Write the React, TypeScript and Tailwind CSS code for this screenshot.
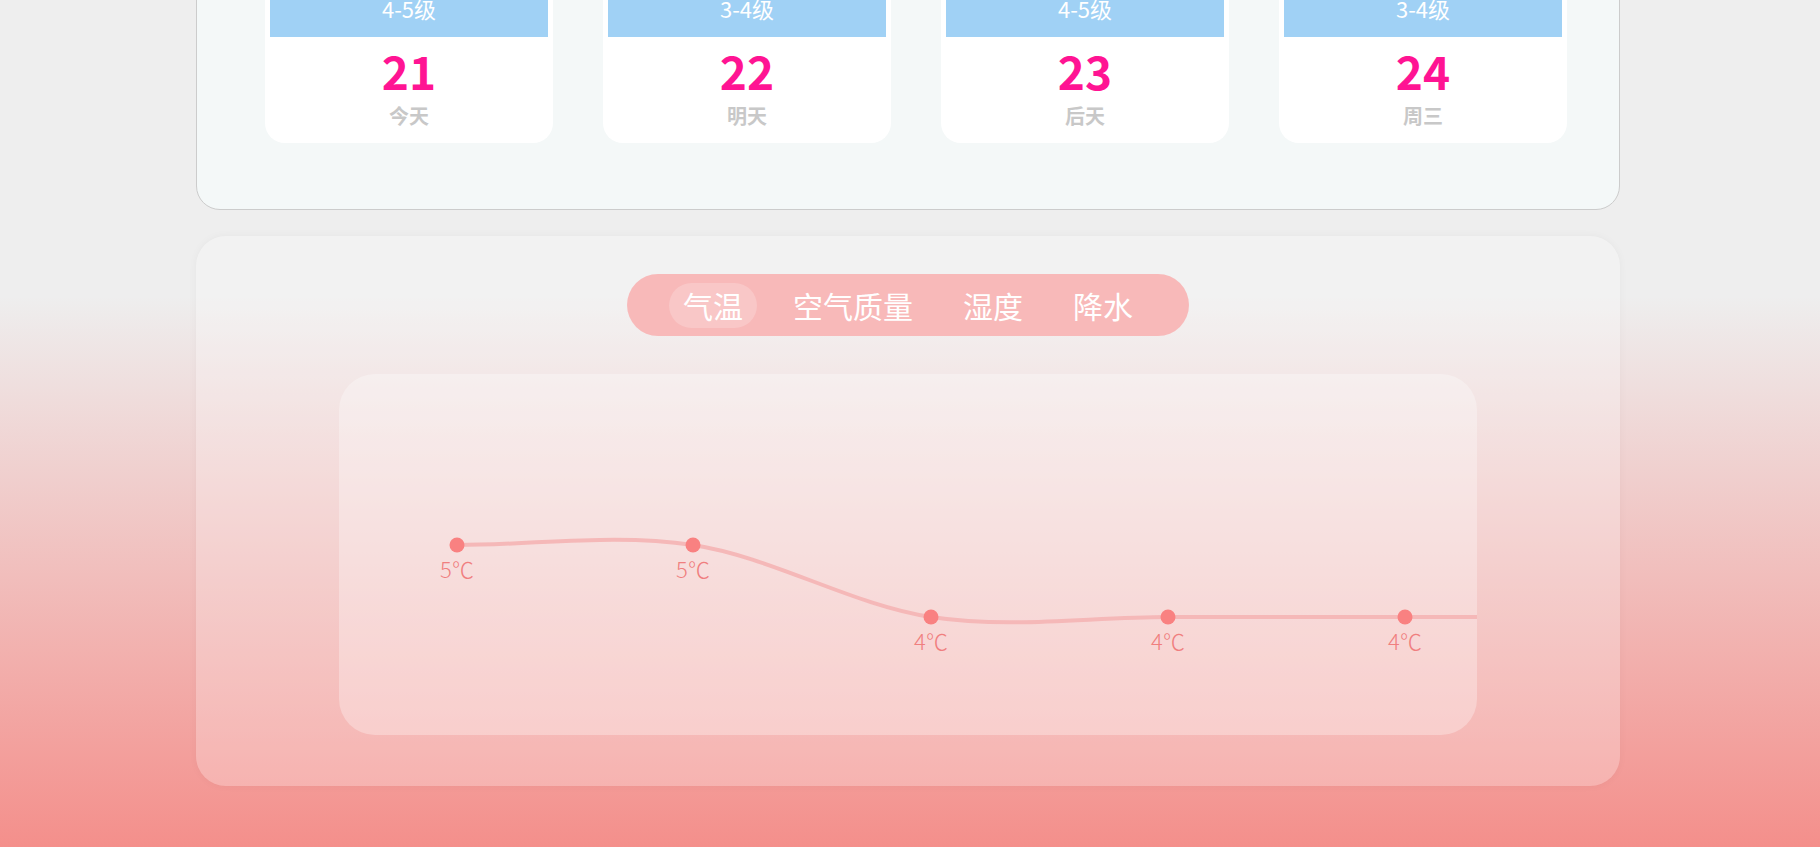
import React, { useState } from "react";

const forecast = [
  { wind: "4-5级", day: 21, label: "今天" },
  { wind: "3-4级", day: 22, label: "明天" },
  { wind: "4-5级", day: 23, label: "后天" },
  { wind: "3-4级", day: 24, label: "周三" },
];

const tabs = ["气温", "空气质量", "湿度", "降水"];

// chart points, relative to the chart box (1138 x 361)
const points = [
  { x: 118, y: 171, v: "5℃" },
  { x: 354, y: 171, v: "5℃" },
  { x: 592, y: 243, v: "4℃" },
  { x: 829, y: 243, v: "4℃" },
  { x: 1066, y: 243, v: "4℃" },
];

const linePath =
  "M118 171 C197 171 275 159 354 171 C433 183 513 231 592 243 C671 255 750 243 829 243 L1303 243";

const ForecastCard = ({ wind, day, label }: { wind: string; day: number; label: string }) => (
  <div className="flex flex-col items-center rounded-[20px] bg-white px-[5px] pt-[5px] pb-[15px]">
    <div className="flex h-[75px] w-full items-end justify-center bg-[#a0d1f5] pb-[14px] text-[22px] leading-[30px] text-white">
      {wind}
    </div>
    <div className="mt-[5px] text-[46px] font-bold leading-[56px] text-[#ff1493]">{day}</div>
    <div className="mt-[6px] text-[20px] font-bold leading-[24px] text-[#c8c8c8]">{label}</div>
  </div>
);

export default function App() {
  const [active, setActive] = useState(0);

  return (
    <div className="h-[847px] w-full overflow-hidden bg-[linear-gradient(180deg,#eeeeee_0%,#eeeeee_35%,#f48f8b_100%)] font-['Noto_Sans_CJK_SC','Noto_Sans',sans-serif]">
      <div className="ml-[196px] flex w-[1424px] flex-col gap-[26px]">
        {/* Forecast panel (scrolled, top cut off) */}
        <div className="-mt-[59px] grid grid-cols-[repeat(4,288px)] gap-x-[50px] rounded-[24px] border border-[#cccccc] bg-[#f4f8f8] pt-[15px] pb-[66px] pl-[68px]">
          {forecast.map((f) => (
            <ForecastCard key={f.day} {...f} />
          ))}
        </div>

        {/* Trend panel */}
        <div className="flex flex-col items-center rounded-[30px] bg-white/25 pt-[38px] pb-[51px] shadow-[0_0_8px_rgba(0,0,0,0.04)]">
          <div className="flex h-[62px] items-center gap-[22px] rounded-full bg-[#f8b9b9] px-[42px]">
            {tabs.map((t, i) => (
              <button
                key={t}
                onClick={() => setActive(i)}
                className={
                  "flex h-[45px] items-center rounded-full px-[14px] text-[30px] leading-none text-white " +
                  (i === active ? "bg-white/20" : "")
                }
              >
                {t}
              </button>
            ))}
          </div>

          <div className="relative mt-[38px] h-[361px] w-[1138px] overflow-hidden rounded-[36px] bg-white/30">
            <svg className="absolute inset-0" width="1138" height="361" viewBox="0 0 1138 361">
              <path d={linePath} fill="none" stroke="#f5b8b8" strokeWidth="4" strokeLinecap="round" />
              {points.map((p, i) => (
                <g key={i}>
                  <circle cx={p.x} cy={p.y} r="7.5" fill="#f98181" />
                  <text
                    x={p.x}
                    y={p.y + 33}
                    textAnchor="middle"
                    fontSize="22"
                    fontWeight="300"
                    fill="#f07f7f"
                    fontFamily="'Noto Sans CJK SC', 'Noto Sans', sans-serif"
                  >
                    {p.v}
                  </text>
                </g>
              ))}
            </svg>
          </div>
        </div>
      </div>
    </div>
  );
}
